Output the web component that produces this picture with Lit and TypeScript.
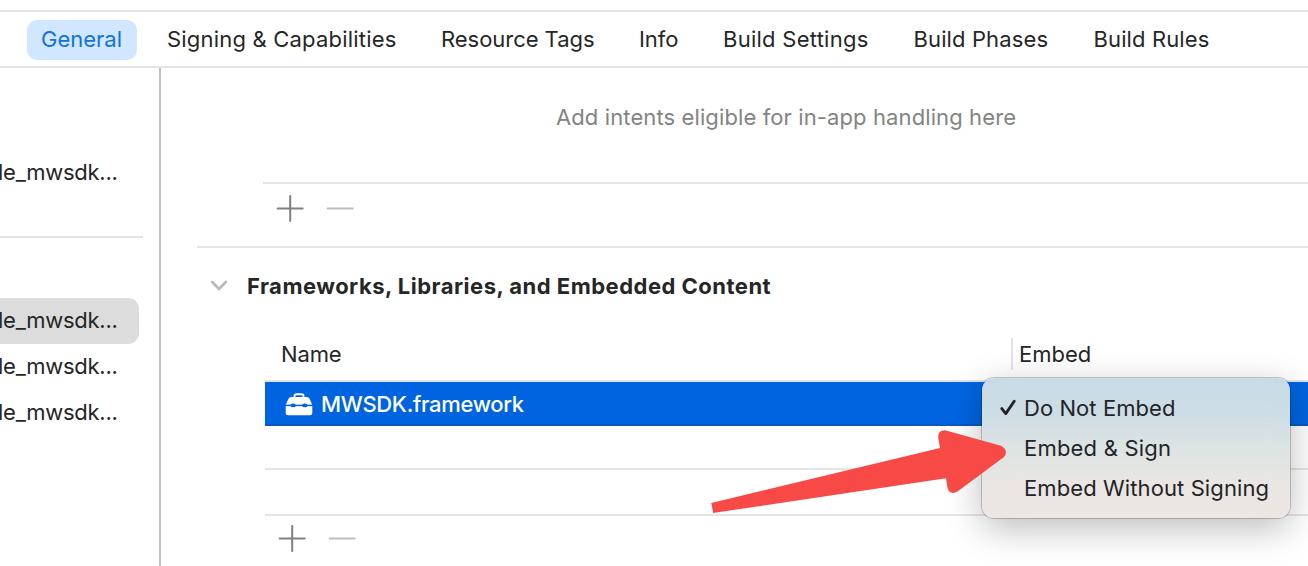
import { LitElement, html, css } from "lit";
import { customElement, property, state } from "lit/decorators.js";
import { classMap } from "lit/directives/class-map.js";

@customElement("add-remove-bar")
class AddRemoveBar extends LitElement {
  static styles = css`
    :host { display: flex; gap: 22px; }
    svg { display: block; width: 28px; height: 28px; fill: none; stroke-width: 2; stroke-linecap: round; }
    .add { stroke: #808080; }
    .remove { stroke: #bdbdbd; }
  `;
  render() {
    return html`
      <svg class="add" viewBox="0 0 28 28"><path d="M1.7 13.5H26.7M14.2 1V26" /></svg>
      <svg class="remove" viewBox="0 0 28 28"><path d="M1.7 13.5H26.7" /></svg>
    `;
  }
}

@customElement("embed-menu")
class EmbedMenu extends LitElement {
  @property({ type: Number }) selected = 0;
  static styles = css`
    :host {
      display: block; box-sizing: border-box; width: 308px; height: 140px; padding-top: 10px;
      border-radius: 12px;
      background: linear-gradient(180deg, #c8dbe7 0%, #cddde5 25%, #dee4e3 52%, #eae6e3 76%, #ede6e3 100%);
      box-shadow: 0 0 0 1px rgba(0, 0, 0, 0.2), 0 10px 36px rgba(0, 0, 0, 0.27);
    }
    .item { display: grid; grid-template-columns: 24px 1fr; align-items: center; height: 40px; padding-left: 18px; color: #1f2426; white-space: nowrap; }
    .l0 { letter-spacing: 0.07px; }
    .l1 { letter-spacing: 0.2px; }
    .l2 { letter-spacing: 0.1px; }
    svg { width: 16px; height: 17px; fill: none; stroke: #1f2426; stroke-width: 2.8; stroke-linecap: round; stroke-linejoin: round; }
  `;
  render() {
    return ["Do Not Embed", "Embed & Sign", "Embed Without Signing"].map(
      (label, i) => html`<div class="item">
        <span>${i === this.selected ? html`<svg viewBox="0 0 16 17"><path d="M1.8 9.6L5.8 14.6L14.2 2.2" /></svg>` : ""}</span>
        <span class="l${i}">${label}</span>
      </div>`
    );
  }
}

@customElement("app-root")
class AppRoot extends LitElement {
  @state() tab = 0;
  tabs = ["General", "Signing & Capabilities", "Resource Tags", "Info", "Build Settings", "Build Phases", "Build Rules"];

  static styles = css`
    :host {
      display: flex; flex-direction: column; position: relative; box-sizing: border-box; width: 1308px; height: 566px; padding-top: 10px;
      overflow: hidden; background: #fff; color: #262626; font: 22px/28px Inter, sans-serif; letter-spacing: 0.1px;
    }
    .tabs {
      display: grid; grid-template-columns: 126px 274px 198px 84px 190.5px 180px 160px; align-items: center;
      box-sizing: border-box; flex: none; height: 58px; padding: 2px 0 0 27px; border-top: 2px solid #e5e5e5; border-bottom: 2px solid #e5e5e5;
    }
    .tab { justify-self: start; box-sizing: border-box; height: 40px; padding: 5px 14px; border-radius: 10px; white-space: nowrap; }
    .tab.active { width: 110px; background: #d1e6ff; color: #1273d8; }
    .t0 { letter-spacing: 0; }
    .t1 { letter-spacing: 0.2px; }
    .t2 { letter-spacing: -0.04px; }
    .t3 { letter-spacing: -0.05px; }
    .t4 { letter-spacing: 0.26px; }
    .t5 { letter-spacing: 0.12px; }
    .t6 { letter-spacing: 0.12px; }
    .body { display: flex; flex: 1; min-height: 0; }
    .side { box-sizing: border-box; width: 161px; border-right: 2px solid #bfbfbf; padding-top: 82px; overflow: hidden; letter-spacing: -0.25px; }
    .target { display: flex; align-items: center; box-sizing: border-box; width: 139px; height: 46px; padding-bottom: 2px; border-radius: 0 11px 11px 0; white-space: nowrap; }
    .target span { margin-left: -2px; }
    .target.selected { background: #dcdcdc; }
    .rule { width: 143px; height: 2px; margin: 40px 0 60px; background: #e3e3e3; }
    .main { flex: 1; min-width: 0; display: flex; flex-direction: column; }
    .intents { box-sizing: border-box; height: 116px; margin-left: 102px; padding: 35px 0 0 293px; border-bottom: 2px solid #e5e5e5; color: #838383; white-space: nowrap; letter-spacing: 0.11px; }
    .bar { margin-left: 115px; padding-top: 11px; height: 51px; }
    .section { margin-left: 36px; border-top: 2px solid #e5e5e5; }
    .heading { display: flex; align-items: center; height: 76px; padding-left: 13px; gap: 19px; font-weight: 700; letter-spacing: 0.49px; white-space: nowrap; }
    .chevron { width: 18px; height: 12px; fill: none; stroke: #bababa; stroke-width: 2.7; stroke-linecap: round; stroke-linejoin: round; }
    .table { margin-left: 68px; }
    .head { display: grid; grid-template-columns: 746px 1fr; height: 58px; box-sizing: border-box; padding-top: 14px; border-bottom: 2px solid #dfe6ee; }
    .name { padding-left: 16px; line-height: 33px; letter-spacing: -0.15px; }
    .embed { box-sizing: border-box; height: 32px; padding-left: 6px; border-left: 2px solid #e3e3e3; line-height: 33px; letter-spacing: 0; }
    .row { box-sizing: border-box; height: 44px; border-bottom: 2px solid #e5e5e5; }
    .row.last { height: 46px; }
    .row.chosen { display: flex; align-items: center; gap: 8px; padding: 2px 0 0 20px; border-bottom: 2px solid #0858bd; background: #0064e1; color: #fff; font-weight: 500; letter-spacing: -0.33px; }
    .box { width: 28px; height: 24px; }
    .foot { padding: 9px 0 0 13px; }
    .menu { position: absolute; left: 982px; top: 378px; }
    .arrow { position: absolute; left: 700px; top: 420px; width: 320px; height: 104px; }
  `;

  target(selected = false) {
    return html`<div class=${classMap({ target: true, selected })}><span>le_mwsdk...</span></div>`;
  }

  render() {
    return html`
      <nav class="tabs">
        ${this.tabs.map(
          (t, i) => html`<div class=${classMap({ tab: true, active: i === this.tab, ["t" + i]: true })} @click=${() => (this.tab = i)}>${t}</div>`
        )}
      </nav>
      <div class="body">
        <aside class="side">
          ${this.target()}
          <div class="rule"></div>
          ${this.target(true)} ${this.target()} ${this.target()}
        </aside>
        <main class="main">
          <div class="intents">Add intents eligible for in-app handling here</div>
          <add-remove-bar class="bar"></add-remove-bar>
          <section class="section">
            <div class="heading">
              <svg class="chevron" viewBox="0 0 18 12"><path d="M2.2 2L9 9L15.8 2" /></svg>
              <span class="title">Frameworks, Libraries, and Embedded Content</span>
            </div>
            <div class="table">
              <div class="head"><div class="name">Name</div><div class="embed">Embed</div></div>
              <div class="row chosen">
                <svg class="box" viewBox="0 0 28 24">
                  <path d="M9.5 6V4.2Q9.5 2.3 11.4 2.3H16.6Q18.5 2.3 18.5 4.2V6" fill="none" stroke="#fff" stroke-width="1.9" />
                  <path d="M6.4 5H21.6Q23.8 5 24.7 7L27.3 13V21Q27.3 23.3 25 23.3H3Q.7 23.3 .7 21V13L3.3 7Q4.2 5 6.4 5Z" fill="#fff" />
                  <path d="M0 13.4H28" stroke="#0064e1" stroke-width="1.5" />
                  <ellipse cx="8.2" cy="13.4" rx="2.7" ry="1.9" fill="#0064e1" />
                  <ellipse cx="19.8" cy="13.4" rx="2.7" ry="1.9" fill="#0064e1" />
                </svg>
                <span>MWSDK.framework</span>
              </div>
              <div class="row"></div>
              <div class="row last"></div>
              <add-remove-bar class="foot"></add-remove-bar>
            </div>
          </section>
        </main>
      </div>
      <embed-menu class="menu"></embed-menu>
      <svg class="arrow" viewBox="700 420 320 104">
        <path fill="#f74a46" d="M711.3 503L940 448L938.2 437.5Q938 430 945 430.3L1001 445.8Q1009 450.5 1004 457L957.5 491.5Q950 495.5 947.5 488L946 478.3L713.2 513Z" />
      </svg>
    `;
  }
}
